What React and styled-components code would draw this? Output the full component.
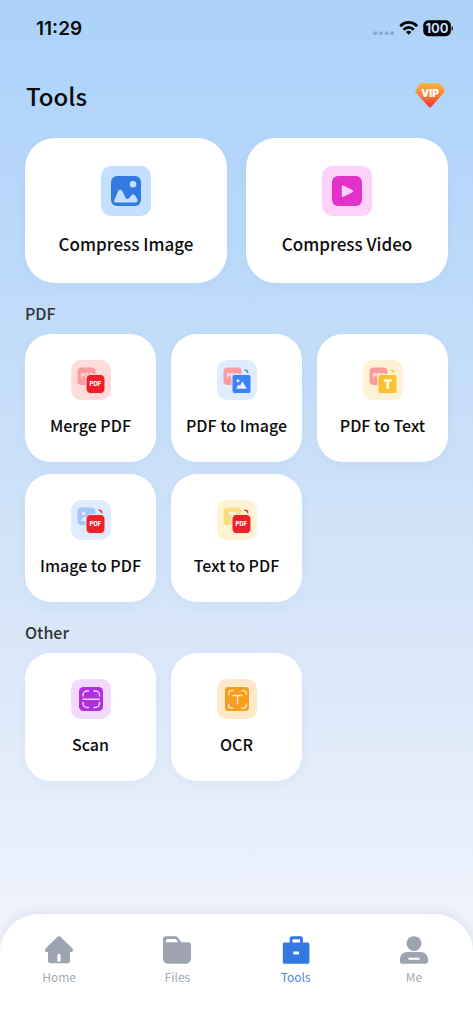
import styled, { createGlobalStyle } from "styled-components";

const RED = "#ee2027";
const BLUE = "#3478e2";
const GRAY = "#9da3b0";

const PdfText = ({ x, y, size, fill }) => (
  <SvgText x={x} y={y} fontSize={size} fill={fill}>
    PDF
  </SvgText>
);

const PictureIcon = () => (
  <svg viewBox="0 0 50 50" width="100%" height="100%" aria-hidden="true">
    <rect x="10" y="10" width="30" height="30" rx="6" fill={BLUE} />
    <circle cx="32" cy="18.3" r="3.3" fill="#c4e0fe" />
    <path
      d="M13.2 34.5 17 25.5C18 23.3 20.5 23.3 21.5 25.5L24.4 31.2C25.2 33.2 27 33.6 28.2 32L29.8 29.9C31.4 27.9 33.2 28 34.5 30L36.4 33.2C37.2 35.2 36.3 36.5 34.5 36.5H15C13.5 36.5 12.6 35.8 13.2 34.5Z"
      fill="#c4e0fe"
    />
  </svg>
);

const VideoIcon = () => (
  <svg viewBox="0 0 50 50" width="100%" height="100%" aria-hidden="true">
    <rect x="10" y="10" width="30" height="30" rx="6" fill="#e232ca" />
    <path
      d="M21 20.5V29.8L30 25.2Z"
      fill="#fdd2fa"
      stroke="#fdd2fa"
      strokeWidth="2.4"
      strokeLinejoin="round"
    />
  </svg>
);

// two stacked sheets: the source behind, the result in front
const ConvertIcon = ({ from, to, tile }) => {
  const backFill = { pdf: "#ff9b9e", image: "#a5c6f9", text: "#fcdc80" }[from];
  const frontFill = { pdf: RED, image: "#3b82f6", text: "#fbc02d" }[to];
  return (
    <svg viewBox="0 0 40 40" width="100%" height="100%" aria-hidden="true">
      <rect x="6.5" y="7.5" width="18" height="17.5" rx="4" fill={backFill} />
      {from === "pdf" && <PdfText x={15.8} y={18.4} size={6} fill={tile} />}
      {from === "image" && (
        <g fill={tile}>
          <circle cx="12.6" cy="13.4" r="1.9" />
          <path d="M9.5 21 13.5 16.5 18 21Z" />
        </g>
      )}
      {from === "text" && (
        <path d="M11.5 12.3H19.5V14.5H16.7V21H14.3V14.5H11.5Z" fill={tile} />
      )}
      {from !== to && (
        <path
          d="M27.6 10.2C29.5 10 30.6 11 30.8 12.9"
          fill="none"
          stroke={frontFill}
          strokeWidth="1.5"
        />
      )}
      <rect
        x="15"
        y="14.5"
        width="19"
        height="19"
        rx={to === "pdf" ? 4.5 : 2.5}
        fill={frontFill}
        stroke={tile}
      />
      {to === "pdf" && <PdfText x={24.5} y={26.3} size={6} fill="#fff" />}
      {to === "image" && (
        <g fill="#e8f1ff">
          <circle cx="21" cy="20.8" r="1.5" />
          <path d="M19 28.8 21.6 24.6 23 25.8 25.4 21.3 29.8 28.8Z" />
        </g>
      )}
      {to === "text" && (
        <path d="M20.8 19.2H28.8V21.8H26.2V29H23.3V21.8H20.8Z" fill="#fff6df" />
      )}
    </svg>
  );
};

const ScanIcon = () => (
  <svg viewBox="0 0 40 40" width="100%" height="100%" aria-hidden="true">
    <rect x="8" y="8" width="24" height="24" rx="4.5" fill="#af30de" />
    <path
      d="M12 17.5V16A4 4 0 0 1 16 12H18M22.5 12H24.5A4 4 0 0 1 28.5 16V17.5M28.5 23V24.5A4 4 0 0 1 24.5 28.5H22.5M18 28.5H16A4 4 0 0 1 12 24.5V23M11.5 20.3H29"
      fill="none"
      stroke="#f3d9fd"
      strokeWidth="1.4"
    />
  </svg>
);

const OcrIcon = () => (
  <svg viewBox="0 0 40 40" width="100%" height="100%" aria-hidden="true">
    <rect x="8" y="8" width="24" height="24" rx="3.5" fill="#f59e20" />
    <path
      d="M11.7 16V14.2A2.5 2.5 0 0 1 14.2 11.7H16.5M24.5 11.7H26.8A2.5 2.5 0 0 1 29.3 14.2V16M29.3 24.5V26.5A2.5 2.5 0 0 1 26.8 29H24.5M16.5 29H14.2A2.5 2.5 0 0 1 11.7 26.5V24.5M15.5 16.5H25.5M20.5 16.5V25.5"
      fill="none"
      stroke="#ffe7c8"
      strokeWidth="1.3"
    />
  </svg>
);

const HomeIcon = () => (
  <svg viewBox="0 0 28 28" width="28" height="28" aria-hidden="true">
    <path
      fillRule="evenodd"
      fill={GRAY}
      d="M12.3 1.1C13.4 0.1 14.6 0.1 15.7 1.1L27.2 12.2C28.9 14 28 16.2 26 16.2H25V24.5C25 26.4 24 27.3 22.2 27.3H5.8C4 27.3 3 26.4 3 24.5V16.2H2C0 16.2 -0.9 14 0.8 12.2ZM14 18C12.9 18 12.4 18.7 12.4 19.6V24.2C12.4 25.2 12.9 25.8 14 25.8C15.1 25.8 15.6 25.2 15.6 24.2V19.6C15.6 18.7 15.1 18 14 18Z"
    />
  </svg>
);

const FilesIcon = () => (
  <svg viewBox="0 0 28 28" width="28" height="28" aria-hidden="true">
    <path
      fillRule="evenodd"
      fill={GRAY}
      d="M3 0.3H12.2C13.6 0.3 14.5 0.8 15.3 1.9L18.5 6.3H25.6C27.2 6.3 28 7.2 28 8.7V21.5C28 25.7 26 27.8 21.7 27.8H6.3C2 27.8 0 25.7 0 21.5V3.3C0 1.3 1 0.3 3 0.3ZM4.7 3.1C3.6 3.1 3 3.7 3 4.7V6.3H15L13.5 4C13.1 3.4 12.7 3.1 12 3.1Z"
    />
  </svg>
);

const ToolsIcon = () => (
  <svg viewBox="0 0 28 28" width="28" height="28" aria-hidden="true">
    <path
      fillRule="evenodd"
      fill={BLUE}
      d="M7.7 6.4V2.6C7.7 1 8.6 0.2 10.2 0.2H18.4C20 0.2 20.9 1 20.9 2.6V6.4H25.5C26.7 6.4 27.4 7.1 27.4 8.3V25.7C27.4 27 26.7 27.8 25.5 27.8H2.7C1.5 27.8 0.8 27 0.8 25.7V8.3C0.8 7.1 1.5 6.4 2.7 6.4ZM10.5 3.2V6.4H18.1V3.2ZM11.4 15.4V18.5H17V15.4Z"
    />
  </svg>
);

const MeIcon = () => (
  <svg viewBox="0 0 28 28" width="28" height="28" aria-hidden="true">
    <circle cx="14" cy="7.6" r="7.4" fill={GRAY} />
    <path
      fillRule="evenodd"
      fill={GRAY}
      d="M7.5 16H20.5C25 16 28 19 28 23.5V25.3C28 27 27.2 27.8 25.6 27.8H2.4C0.8 27.8 0 27 0 25.3V23.5C0 19 3 16 7.5 16ZM8.5 21.8V23.8H19.5V21.8Z"
    />
  </svg>
);

const VipIcon = () => (
  <svg viewBox="0 0 30 25" width="30" height="25" aria-hidden="true">
    <defs>
      <linearGradient id="vip" x1="0" y1="0" x2="0" y2="1">
        <stop offset="0" stopColor="#fcb33c" />
        <stop offset="0.45" stopColor="#f9863a" />
        <stop offset="1" stopColor="#ee3033" />
      </linearGradient>
    </defs>
    <path
      d="M6.5 0.3H23.5C24.3 0.3 24.8 0.5 25.3 1.1L29.3 7C29.9 8 29.8 8.7 29.1 9.5L16.4 23.7C15.5 24.7 14.5 24.7 13.6 23.7L0.9 9.5C0.2 8.7 0.1 8 0.7 7L4.7 1.1C5.2 0.5 5.7 0.3 6.5 0.3Z"
      fill="url(#vip)"
    />
    <VipText x="15" y="14.3">
      VIP
    </VipText>
  </svg>
);

const SignalIcons = () => (
  <svg viewBox="0 0 80 17" width="80" height="17" aria-hidden="true">
    <g fill="#8aa8c9">
      <circle cx="2.2" cy="13.2" r="2" />
      <circle cx="7.9" cy="13.2" r="2" />
      <circle cx="13.6" cy="13.2" r="2" />
      <circle cx="19.3" cy="13.2" r="2" />
    </g>
    <g fill="none" stroke="#000" strokeWidth="2.7">
      <path d="M27.3 6.2C32.1 1.2 39.3 1.2 44.1 6.2" />
      <path d="M30.6 9.7C33.6 6.6 37.8 6.6 40.8 9.7" />
    </g>
    <path
      d="M33 11.9C34.7 10.3 36.7 10.3 38.4 11.9L35.7 14.8Z"
      fill="#000"
    />
    <rect x="50.3" y="0.3" width="27.5" height="16" rx="5" fill="#000" />
    <path d="M78.6 6.2C80.4 6.8 80.4 10 78.6 10.6Z" fill="#000" />
    <BatteryText x="64" y="13.4">
      100
    </BatteryText>
  </svg>
);

const mainTools = [
  { name: "Compress Image", tile: "#c4e0fe", icon: <PictureIcon /> },
  { name: "Compress Video", tile: "#fdd2fa", icon: <VideoIcon /> },
];

const pdfTools = [
  { name: "Merge PDF", tile: "#ffdcdc", from: "pdf", to: "pdf" },
  { name: "PDF to Image", tile: "#dfebff", from: "pdf", to: "image" },
  { name: "PDF to Text", tile: "#fef2d4", from: "pdf", to: "text" },
  { name: "Image to PDF", tile: "#dfebff", from: "image", to: "pdf" },
  { name: "Text to PDF", tile: "#fef2d4", from: "text", to: "pdf" },
];

const otherTools = [
  { name: "Scan", tile: "#f3d9fd", icon: <ScanIcon /> },
  { name: "OCR", tile: "#ffe7c8", icon: <OcrIcon /> },
];

const tabs = [
  { name: "Home", icon: <HomeIcon /> },
  { name: "Files", icon: <FilesIcon /> },
  { name: "Tools", icon: <ToolsIcon />, active: true },
  { name: "Me", icon: <MeIcon /> },
];

const App = () => {
  return (
    <>
      <GlobalStyle />
      <Page>
        <StatusBar>
          <Time>11:29</Time>
          <SignalIcons />
        </StatusBar>
        <Header>
          <Title>Tools</Title>
          <VipButton type="button" aria-label="VIP">
            <VipIcon />
          </VipButton>
        </Header>
        <Content>
          <MainGrid>
            {mainTools.map((tool) => (
              <Card key={tool.name} type="button" $large>
                <Tile $color={tool.tile} $large>
                  {tool.icon}
                </Tile>
                {tool.name}
              </Card>
            ))}
          </MainGrid>
          <SectionTitle>PDF</SectionTitle>
          <ToolGrid>
            {pdfTools.map((tool) => (
              <Card key={tool.name} type="button">
                <Tile $color={tool.tile}>
                  <ConvertIcon from={tool.from} to={tool.to} tile={tool.tile} />
                </Tile>
                {tool.name}
              </Card>
            ))}
          </ToolGrid>
          <SectionTitle>Other</SectionTitle>
          <ToolGrid>
            {otherTools.map((tool) => (
              <Card key={tool.name} type="button">
                <Tile $color={tool.tile}>{tool.icon}</Tile>
                {tool.name}
              </Card>
            ))}
          </ToolGrid>
        </Content>
        <TabBar>
          {tabs.map((tab) => (
            <Tab key={tab.name} href={`#${tab.name}`} $active={tab.active}>
              {tab.icon}
              {tab.name}
            </Tab>
          ))}
        </TabBar>
      </Page>
    </>
  );
};

export default App;

const GlobalStyle = createGlobalStyle`
  * {
    box-sizing: border-box;
  }
  body {
    margin: 0;
    font-family: "Noto Sans CJK SC", "Noto Sans", sans-serif;
    color: #0c0c0c;
  }
`;

const Page = styled.div`
  display: flex;
  flex-direction: column;
  min-height: 100vh;
  background: linear-gradient(#acd2fa, #b8d8fa 20%, #d5e5f8 58%, #edf2fc 88%, #f0f3fd);
`;

const StatusBar = styled.div`
  display: flex;
  justify-content: space-between;
  align-items: center;
  height: 57px;
  padding: 0 20px 0 36px;
`;

const Time = styled.span`
  font: 600 19px/24px Inter, sans-serif;
`;

const Header = styled.header`
  display: flex;
  justify-content: space-between;
  align-items: center;
  height: 81px;
  padding: 0 28px 4px 26px;
`;

const Title = styled.h1`
  margin: 0;
  font-size: 24px;
  font-weight: 500;
  line-height: 36px;
`;

const VipButton = styled.button`
  display: flex;
  padding: 0;
  border: none;
  background: none;
  cursor: pointer;
`;

const Content = styled.main`
  flex: 1;
  padding: 0 25px 24px;
`;

const MainGrid = styled.div`
  display: grid;
  grid-template-columns: repeat(2, 1fr);
  gap: 19px;
`;

const ToolGrid = styled.div`
  display: grid;
  grid-template-columns: repeat(3, 1fr);
  gap: 12px 15px;
`;

const SectionTitle = styled.h2`
  margin: 20px 0 11px;
  font-size: 16px;
  font-weight: 500;
  line-height: 20px;
  color: #333;
`;

const Card = styled.button`
  display: flex;
  flex-direction: column;
  align-items: center;
  gap: ${({ $large }) => ($large ? "17px" : "15px")};
  padding: ${({ $large }) => ($large ? "28px 0" : "26px 0 27px")};
  border: none;
  border-radius: ${({ $large }) => ($large ? "30px" : "26px")};
  background: #fff;
  box-shadow: 0 4px 12px rgba(80, 120, 180, 0.06);
  color: inherit;
  font-family: inherit;
  font-size: ${({ $large }) => ($large ? "17px" : "16px")};
  font-weight: 500;
  line-height: ${({ $large }) => ($large ? "22px" : "20px")};
  white-space: nowrap;
  cursor: pointer;
`;

const Tile = styled.span`
  width: ${({ $large }) => ($large ? "50px" : "40px")};
  height: ${({ $large }) => ($large ? "50px" : "40px")};
  border-radius: 10px;
  background: ${({ $color }) => $color};

  svg {
    display: block;
  }
`;

const TabBar = styled.nav`
  display: grid;
  grid-template-columns: repeat(4, 1fr);
  height: 110px;
  padding-top: 22px;
  border-radius: 38px 38px 0 0;
  background: #fff;
  box-shadow: 0 -2px 10px rgba(90, 100, 130, 0.12);
`;

const Tab = styled.a`
  display: flex;
  flex-direction: column;
  align-items: center;
  gap: 5px;
  font-size: 12px;
  line-height: 16px;
  color: ${({ $active }) => ($active ? "#4c8ae0" : "#a5a9b3")};
  text-decoration: none;
`;

const SvgText = styled.text`
  font-family: Inter, sans-serif;
  font-weight: 800;
  text-anchor: middle;
`;

const VipText = styled.text`
  font: 900 10px Inter, sans-serif;
  text-anchor: middle;
  fill: #fff;
`;

const BatteryText = styled.text`
  font: 700 13px Inter, sans-serif;
  text-anchor: middle;
  fill: #c3dffb;
`;
